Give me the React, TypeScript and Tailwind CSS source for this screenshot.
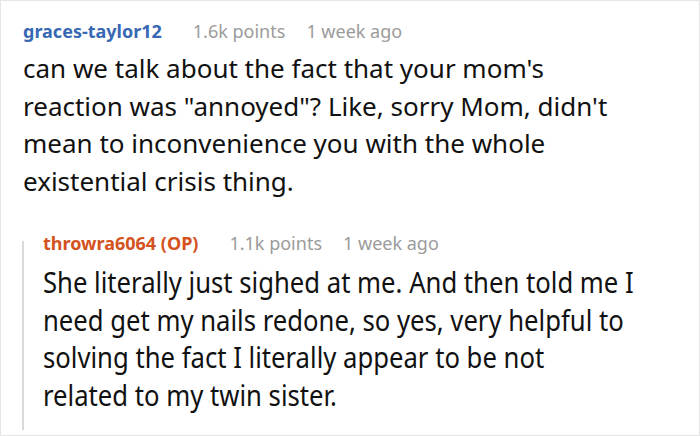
import React from "react";

function MetaRow({ name, nameColor, points, age }: { name: string; nameColor: string; points: string; age: string }) {
  return (
    <div className="flex items-center gap-[31px] text-[18px] leading-[24px]">
      <span className={`font-bold ${nameColor}`}>{name}</span>
      <div className="flex items-center gap-[21px] text-[#9b9b9b]">
        <span>{points}</span>
        <span>{age}</span>
      </div>
    </div>
  );
}

export default function App() {
  return (
    <div
      className="w-[700px] h-[436px] bg-white border border-[#e6e6e6] pl-[21px] pt-[18px] text-[#111] overflow-hidden"
      style={{ fontFamily: '"Noto Sans", "Open Sans", sans-serif' }}
    >
      <div className="pl-px">
        <MetaRow name="graces-taylor12" nameColor="text-[#3768b3]" points="1.6k points" age="1 week ago" />
        <p className="mt-[7px] text-[26px] leading-[37.5px] whitespace-nowrap">
          can we talk about the fact that your mom's
          <br />
          reaction was "annoyed"? Like, sorry Mom, didn't
          <br />
          mean to inconvenience you with the whole
          <br />
          existential crisis thing.
        </p>
      </div>

      <div className="mt-[31px] flex">
        <div className="w-[2px] shrink-0 bg-[#dadada] mt-[10px]" />
        <div className="pl-[19px]">
          <MetaRow name="throwra6064 (OP)" nameColor="text-[#d4521e]" points="1.1k points" age="1 week ago" />
          {/* reply text in the source is a touch condensed */}
          <p className="mt-[8px] text-[29px] leading-[37.5px] pb-[17px] whitespace-nowrap scale-x-[0.885] origin-left">
            She literally just sighed at me. And then told me I
            <br />
            need get my nails redone, so yes, very helpful to
            <br />
            solving the fact I literally appear to be not
            <br />
            related to my twin sister.
          </p>
        </div>
      </div>
    </div>
  );
}
